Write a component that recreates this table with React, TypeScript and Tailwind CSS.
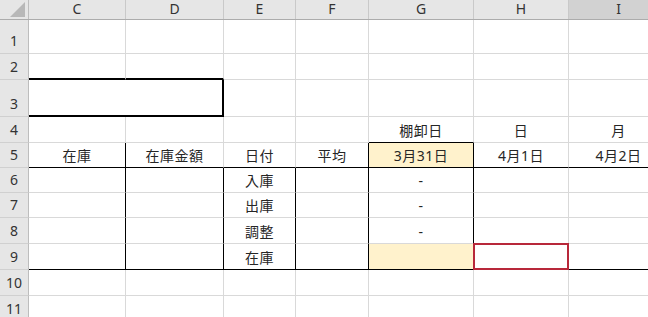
import React from "react";

type Edge = "g" | "k" | "k2" | "n";

const RIGHT: Record<Edge, string> = {
  g: "border-r border-r-[#d9d9d9]",
  k: "border-r border-r-black",
  k2: "border-r-2 border-r-black",
  n: "",
};
const BOTTOM: Record<Edge, string> = {
  g: "border-b border-b-[#d9d9d9]",
  k: "border-b border-b-black",
  k2: "border-b-2 border-b-black",
  n: "",
};

const COLS = [
  { label: "C", w: "w-[97px]" },
  { label: "D", w: "w-[98px]" },
  { label: "E", w: "w-[72px]" },
  { label: "F", w: "w-[73px]" },
  { label: "G", w: "w-[105px]" },
  { label: "H", w: "w-[95px]" },
  { label: "I", w: "w-[100px]" },
];

interface CellSpec {
  text?: string;
  r?: Edge;
  b?: Edge;
  fill?: boolean;
  selected?: boolean;
}

interface RowSpec {
  n: number;
  h: string;
  cells: CellSpec[];
}

const blank = (): CellSpec[] => COLS.map(() => ({}));

const ROWS: RowSpec[] = [
  { n: 1, h: "h-[34px]", cells: blank() },
  {
    n: 2,
    h: "h-[26px]",
    cells: [{ b: "k2" }, { b: "k2" }, {}, {}, {}, {}, {}],
  },
  {
    // C3:D3 merged box
    n: 3,
    h: "h-[37px]",
    cells: [{ b: "k2", r: "n" }, { b: "k2", r: "k2" }, {}, {}, {}, {}, {}],
  },
  {
    n: 4,
    h: "h-[26px]",
    cells: [{}, {}, {}, {}, { text: "棚卸日", b: "k" }, { text: "日" }, { text: "月" }],
  },
  {
    n: 5,
    h: "h-[25px]",
    cells: [
      { text: "在庫", r: "k", b: "k" },
      { text: "在庫金額", b: "k" },
      { text: "日付", b: "k" },
      { text: "平均", r: "k", b: "k" },
      { text: "3月31日", r: "k", b: "k", fill: true },
      { text: "4月1日", b: "k" },
      { text: "4月2日", b: "k" },
    ],
  },
  ...[
    { n: 6, h: "h-[25px]", label: "入庫", g: "-" },
    { n: 7, h: "h-[25px]", label: "出庫", g: "-" },
    { n: 8, h: "h-[26px]", label: "調整", g: "-" },
    { n: 9, h: "h-[26px]", label: "在庫", g: "" },
  ].map(({ n, h, label, g }) => {
    const last = n === 9;
    const b: Edge = last ? "k" : "g";
    return {
      n,
      h,
      cells: [
        { r: "k", b },
        { r: "k", b },
        { text: label, r: "k", b },
        { r: "k", b },
        { text: g, r: "k", b, fill: last },
        { b, selected: last },
        { b },
      ] as CellSpec[],
    };
  }),
  { n: 10, h: "h-[26px]", cells: blank() },
  { n: 11, h: "h-[26px]", cells: blank() },
];

function Cell({ spec, w }: { spec: CellSpec; w: string }) {
  const r = RIGHT[spec.r ?? "g"];
  const b = BOTTOM[spec.b ?? "g"];
  return (
    <div
      className={`relative shrink-0 h-full flex items-end justify-center pb-[2px] ${w} ${r} ${b} ${
        spec.fill ? "bg-[#fff2cc]" : "bg-white"
      }`}
    >
      <span className="leading-[18px] text-[14px] tracking-[0.5px] text-[#262626]">{spec.text}</span>
      {spec.selected && (
        <div className="absolute -left-px -top-px -right-px -bottom-px border-2 border-[#b8283a]" />
      )}
    </div>
  );
}

export default function App() {
  return (
    <div
      className="w-[648px] h-[317px] overflow-hidden bg-white select-none"
      style={{ fontFamily: '"Noto Sans", "Noto Sans CJK JP", sans-serif' }}
    >
      {/* column headers */}
      <div className="flex h-[20px] bg-[#e6e6e6] border-b border-b-[#acacac]">
        <div className="relative w-[29px] shrink-0 h-full border-r border-r-[#bdbdbd]">
          <svg className="absolute right-[3px] bottom-[2px]" width="15" height="15" viewBox="0 0 15 15">
            <polygon points="15,0 15,15 0,15" fill="#b8b8b8" />
          </svg>
        </div>
        {COLS.map((c) => (
          <div
            key={c.label}
            className={`${c.w} shrink-0 h-full flex items-start justify-center border-r border-r-[#c9c9c9] text-[14px] leading-[17px] text-[#333] ${
              c.label === "I" ? "bg-[#d2d2d2]" : ""
            }`}
          >
            {c.label}
          </div>
        ))}
      </div>

      {ROWS.map((row) => (
        <div key={row.n} className={`flex ${row.h}`}>
          <div className="w-[29px] shrink-0 h-full flex items-end justify-center pb-[3px] bg-[#e6e6e6] border-r border-r-[#bdbdbd] border-b border-b-[#d0d0d0]">
            <span className="text-[14px] leading-[18px] text-[#333]">{row.n}</span>
          </div>
          {row.cells.map((spec, i) => (
            <Cell key={i} spec={spec} w={COLS[i].w} />
          ))}
        </div>
      ))}
    </div>
  );
}
